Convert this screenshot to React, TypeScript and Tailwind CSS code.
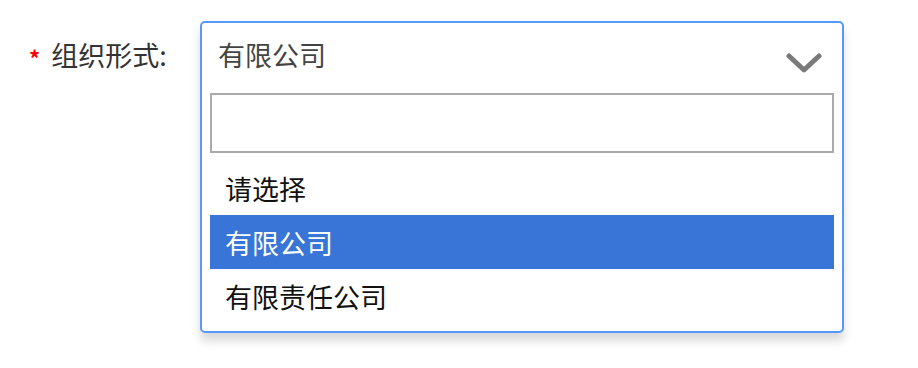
const options = ['请选择', '有限公司', '有限责任公司'];

export default function App() {
  const selected = '有限公司';
  return (
    <div className="min-h-screen bg-white pl-[29px] pt-[21px] font-['Noto_Sans_CJK_SC',sans-serif]">
      <div className="flex items-start">
        <div className="flex h-[66px] w-[171px] items-center">
          <span className="mr-[11px] mt-[6px] text-[22px] font-bold leading-none text-[#f00]">*</span>
          <span className="text-[27px] leading-none text-[#333]">组织形式:</span>
        </div>
        <div className="w-[644px] rounded-[5px] border-2 border-[#5897fb] bg-white shadow-[0_8px_10px_rgba(0,0,0,0.15)]">
          <div className="flex h-[62px] items-center justify-between pl-[16px] pr-[20px]">
            <span className="text-[27px] leading-none text-[#444]">{selected}</span>
            <svg width="36" height="24" viewBox="0 0 36 24" className="mt-[20px] blur-[0.7px]">
              <polyline
                points="3,4 18,18 33,4"
                fill="none"
                stroke="#7a7a7a"
                strokeWidth="5"
                strokeLinecap="round"
                strokeLinejoin="round"
              />
            </svg>
          </div>
          <div className="px-[8px] pb-[8px] pt-[8px]">
            <input type="text" className="block h-[60px] w-full border-2 border-[#aaa] bg-white px-2 outline-none" />
            <ul className="mt-[8px]">
              {options.map((o) => (
                <li
                  key={o}
                  className={
                    o === selected
                      ? 'flex h-[54px] items-center bg-[#3875d7] px-[15px] text-[27px] leading-none text-white'
                      : 'flex h-[54px] items-center px-[15px] text-[27px] leading-none text-[#111]'
                  }
                >
                  {o}
                </li>
              ))}
            </ul>
          </div>
        </div>
      </div>
    </div>
  );
}
